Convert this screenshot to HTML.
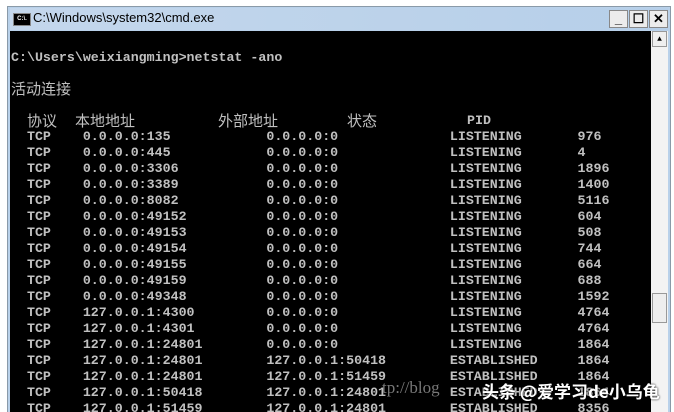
<!DOCTYPE html><html><head><style>
html,body{margin:0;width:674px;height:412px;overflow:hidden}
body{background:#fff;position:relative;font-family:"Liberation Mono",monospace}
.frame{position:absolute;left:7px;top:6px;width:664px;height:406px;background:#b9d1ea;border:1px solid #8a9aa8;border-bottom:none;box-sizing:border-box}
.title{position:absolute;left:10px;top:8px;width:658px;height:22px;background:linear-gradient(90deg,#c4d7ec,#b6cfe9)}
.ttxt{position:absolute;left:33px;top:10px;font:13px "Liberation Sans",sans-serif;color:#000}
.ico{position:absolute;left:13px;top:13px;width:16px;height:11px;background:#000;border:1px solid #888;color:#fff;font:bold 6px "Liberation Sans";line-height:11px;text-align:center}
.btn{position:absolute;top:10px;width:17px;height:16px;background:#ececec;border:1px solid #888;font:bold 13px "Liberation Sans";text-align:center;line-height:16px}
.con{position:absolute;left:10px;top:31px;width:641px;height:381px;background:#000}
.sb{position:absolute;left:651px;top:31px;width:17px;height:381px;background:#f3f3f3}
.sbb{position:absolute;left:652px;top:31px;width:15px;height:16px;background:#efefef;border:1px solid #999;box-sizing:border-box;font-size:8px;text-align:center;line-height:15px}
.thumb{position:absolute;left:652px;top:293px;width:15px;height:30px;background:#eee;border:1px solid #999;box-sizing:border-box}
pre{position:absolute;left:11px;margin:0;color:#c0c0c0;font:bold 13.3px/16px "Liberation Mono",monospace}
.cn{position:absolute;color:#c0c0c0;font:15px "Noto Sans CJK SC",sans-serif}
.wm{position:absolute;left:482px;top:378px;color:#fff;font:bold 17px "Noto Sans CJK SC",sans-serif;text-shadow:0 0 2px #000}
.wm2{position:absolute;left:382px;top:378px;color:#777;font:17px "Liberation Serif",serif}
</style></head><body>
<div class="frame"></div>
<div class="title"></div>
<div class="ico">C:\.</div>
<div class="ttxt">C:\Windows\system32\cmd.exe</div>
<div class="btn" style="left:609px">_</div>
<div class="btn" style="left:629px">☐</div>
<div class="btn" style="left:649px">✕</div>
<div class="con"></div>
<div class="sb"></div><div class="sbb">▲</div><div class="thumb"></div>
<pre style="top:50px">C:\Users\weixiangming&gt;netstat -ano</pre>
<div class="cn" style="left:11px;top:78px">活动连接</div>
<div class="cn" style="left:27px;top:110px">协议</div>
<div class="cn" style="left:75px;top:110px">本地地址</div>
<div class="cn" style="left:218px;top:110px">外部地址</div>
<div class="cn" style="left:347px;top:110px">状态</div>
<pre style="top:113px;left:467px">PID</pre>
<pre style="top:129px">  TCP    0.0.0.0:135            0.0.0.0:0              LISTENING       976
  TCP    0.0.0.0:445            0.0.0.0:0              LISTENING       4
  TCP    0.0.0.0:3306           0.0.0.0:0              LISTENING       1896
  TCP    0.0.0.0:3389           0.0.0.0:0              LISTENING       1400
  TCP    0.0.0.0:8082           0.0.0.0:0              LISTENING       5116
  TCP    0.0.0.0:49152          0.0.0.0:0              LISTENING       604
  TCP    0.0.0.0:49153          0.0.0.0:0              LISTENING       508
  TCP    0.0.0.0:49154          0.0.0.0:0              LISTENING       744
  TCP    0.0.0.0:49155          0.0.0.0:0              LISTENING       664
  TCP    0.0.0.0:49159          0.0.0.0:0              LISTENING       688
  TCP    0.0.0.0:49348          0.0.0.0:0              LISTENING       1592
  TCP    127.0.0.1:4300         0.0.0.0:0              LISTENING       4764
  TCP    127.0.0.1:4301         0.0.0.0:0              LISTENING       4764
  TCP    127.0.0.1:24801        0.0.0.0:0              LISTENING       1864
  TCP    127.0.0.1:24801        127.0.0.1:50418        ESTABLISHED     1864
  TCP    127.0.0.1:24801        127.0.0.1:51459        ESTABLISHED     1864
  TCP    127.0.0.1:50418        127.0.0.1:24801        ESTABLISHED     1864
  TCP    127.0.0.1:51459        127.0.0.1:24801        ESTABLISHED     8356</pre>
<div class="wm2">tp://blog</div>
<div class="wm">头条 @爱学习de小乌龟</div>
</body></html>
